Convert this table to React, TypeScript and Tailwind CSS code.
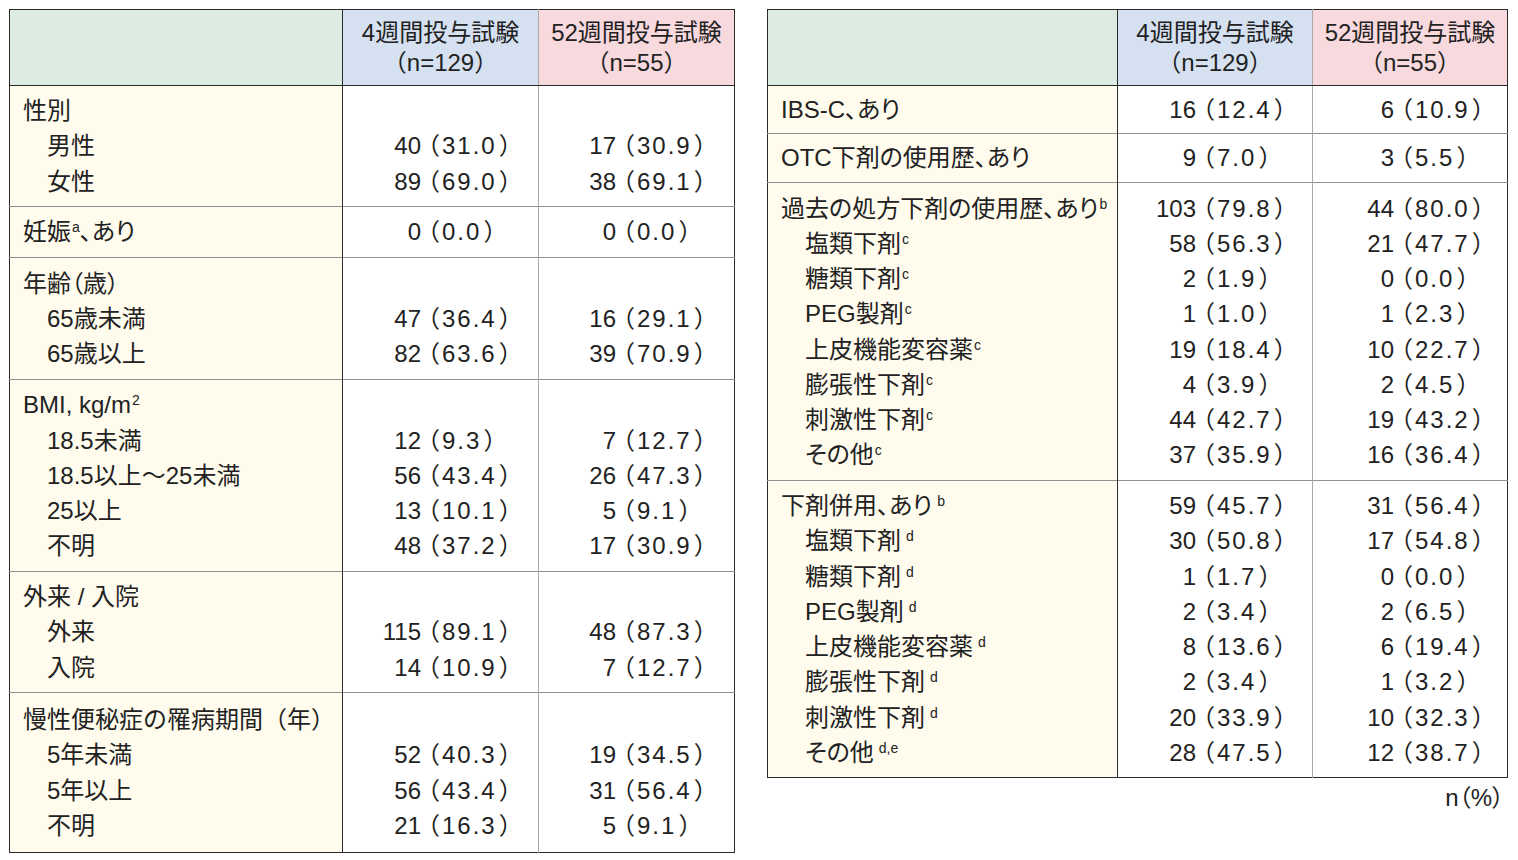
import React from "react";

type Line = { t: string; sup?: string; after?: string; gap?: boolean; ind?: boolean; np?: boolean };
type Section = { h: number; lines: Line[]; c1: string[]; c2: string[] };

const leftSections: Section[] = [
  {
    h: 121,
    lines: [{ t: "性別" }, { t: "男性", ind: true }, { t: "女性", ind: true }],
    c1: ["", "40|31.0", "89|69.0"],
    c2: ["", "17|30.9", "38|69.1"],
  },
  {
    h: 51,
    lines: [{ t: "妊娠", sup: "a", after: "、あり" }],
    c1: ["0|0.0"],
    c2: ["0|0.0"],
  },
  {
    h: 122,
    lines: [{ t: "年齢（歳）" }, { t: "65歳未満", ind: true }, { t: "65歳以上", ind: true }],
    c1: ["", "47|36.4", "82|63.6"],
    c2: ["", "16|29.1", "39|70.9"],
  },
  {
    h: 192,
    lines: [
      { t: "BMI, kg/m", sup: "2" },
      { t: "18.5未満", ind: true },
      { t: "18.5以上～25未満", ind: true },
      { t: "25以上", ind: true },
      { t: "不明", ind: true },
    ],
    c1: ["", "12|9.3", "56|43.4", "13|10.1", "48|37.2"],
    c2: ["", "7|12.7", "26|47.3", "5|9.1", "17|30.9"],
  },
  {
    h: 121,
    lines: [{ t: "外来 / 入院" }, { t: "外来", ind: true }, { t: "入院", ind: true }],
    c1: ["", "115|89.1", "14|10.9"],
    c2: ["", "48|87.3", "7|12.7"],
  },
  {
    h: 160,
    lines: [
      { t: "慢性便秘症の罹病期間（年）", np: true },
      { t: "5年未満", ind: true },
      { t: "5年以上", ind: true },
      { t: "不明", ind: true },
    ],
    c1: ["", "52|40.3", "56|43.4", "21|16.3"],
    c2: ["", "19|34.5", "31|56.4", "5|9.1"],
  },
];

const rightSections: Section[] = [
  {
    h: 48,
    lines: [{ t: "IBS-C、あり" }],
    c1: ["16|12.4"],
    c2: ["6|10.9"],
  },
  {
    h: 49,
    lines: [{ t: "OTC下剤の使用歴、あり" }],
    c1: ["9|7.0"],
    c2: ["3|5.5"],
  },
  {
    h: 298,
    lines: [
      { t: "過去の処方下剤の使用歴、あり", sup: "b" },
      { t: "塩類下剤", sup: "c", ind: true },
      { t: "糖類下剤", sup: "c", ind: true },
      { t: "PEG製剤", sup: "c", ind: true },
      { t: "上皮機能変容薬", sup: "c", ind: true },
      { t: "膨張性下剤", sup: "c", ind: true },
      { t: "刺激性下剤", sup: "c", ind: true },
      { t: "その他", sup: "c", ind: true },
    ],
    c1: ["103|79.8", "58|56.3", "2|1.9", "1|1.0", "19|18.4", "4|3.9", "44|42.7", "37|35.9"],
    c2: ["44|80.0", "21|47.7", "0|0.0", "1|2.3", "10|22.7", "2|4.5", "19|43.2", "16|36.4"],
  },
  {
    h: 297,
    lines: [
      { t: "下剤併用、あり", sup: "b", gap: true },
      { t: "塩類下剤", sup: "d", ind: true, gap: true },
      { t: "糖類下剤", sup: "d", ind: true, gap: true },
      { t: "PEG製剤", sup: "d", ind: true, gap: true },
      { t: "上皮機能変容薬", sup: "d", ind: true, gap: true },
      { t: "膨張性下剤", sup: "d", ind: true, gap: true },
      { t: "刺激性下剤", sup: "d", ind: true, gap: true },
      { t: "その他", sup: "d,e", ind: true, gap: true },
    ],
    c1: ["59|45.7", "30|50.8", "1|1.7", "2|3.4", "8|13.6", "2|3.4", "20|33.9", "28|47.5"],
    c2: ["31|56.4", "17|54.8", "0|0.0", "2|6.5", "6|19.4", "1|3.2", "10|32.3", "12|38.7"],
  },
];

function Label({ l }: { l: Line }) {
  return (
    <div
      className={`h-[35.25px] leading-[35.25px] whitespace-nowrap ${
        l.np ? "" : "[font-feature-settings:'palt']"
      } ${l.ind ? "pl-[24px]" : ""}`}
    >
      {l.t}
      {l.sup && (
        <sup className={`text-[14px] top-[-8px] ${l.gap ? "ml-[5px]" : "ml-[1px]"}`}>{l.sup}</sup>
      )}
      {l.after}
    </div>
  );
}

function Value({ v, w }: { v: string; w: string }) {
  if (!v) return <div className="h-[35.25px]" />;
  const [n, p] = v.split("|");
  return (
    <div className="h-[35.25px] leading-[35.25px] flex whitespace-nowrap">
      <span className={`${w} shrink-0 text-right`}>{n}</span>
      <span className="ml-[-5px]">（</span>
      <span className="ml-[2px] tracking-[2px]">{p}</span>
      <span className="ml-[2px]">）</span>
    </div>
  );
}

function Table({
  sections,
  tw,
  widths,
  numW,
}: {
  sections: Section[];
  tw: string;
  widths: [string, string, string];
  numW: [string, string];
}) {
  return (
    <table className={`${tw} border-collapse table-fixed border border-[#2a2a2a] text-[24px] text-[#222]`}>
      <colgroup>
        <col className={widths[0]} />
        <col className={widths[1]} />
        <col className={widths[2]} />
      </colgroup>
      <thead>
        <tr className="h-[76px]">
          <th className="bg-[#ddece2] border-b border-r border-[#2a2a2a]" />
          <th className="bg-[#d5e1f1] border-b border-r border-b-[#2a2a2a] border-r-[#a8a8a8] font-normal leading-[30px] text-center">
            <div>4週間投与試験</div>
            <div>（n=129）</div>
          </th>
          <th className="bg-[#f8d9de] border-b border-[#2a2a2a] font-normal leading-[30px] text-center">
            <div>52週間投与試験</div>
            <div>（n=55）</div>
          </th>
        </tr>
      </thead>
      <tbody>
        {sections.map((s, i) => (
          <tr key={i} style={{ height: s.h }}>
            <td
              className={`bg-[#fffcee] border-r border-r-[#2a2a2a] align-middle pl-[13px] p-0 ${
                i > 0 ? "border-t border-t-[#8f8f8f]" : ""
              }`}
            >
              {s.lines.map((l, j) => (
                <Label key={j} l={l} />
              ))}
            </td>
            <td
              className={`bg-white border-r border-r-[#a8a8a8] align-middle p-0 ${
                i > 0 ? "border-t border-t-[#8f8f8f]" : ""
              }`}
            >
              {s.c1.map((v, j) => (
                <Value key={j} v={v} w={numW[0]} />
              ))}
            </td>
            <td
              className={`bg-white align-middle p-0 ${i > 0 ? "border-t border-t-[#8f8f8f]" : ""}`}
            >
              {s.c2.map((v, j) => (
                <Value key={j} v={v} w={numW[1]} />
              ))}
            </td>
          </tr>
        ))}
      </tbody>
    </table>
  );
}

export default function App() {
  return (
    <div className="w-[1518px] h-[860px] bg-white flex items-start gap-[32px] pl-[9px] pt-[9px] font-['Liberation_Sans','Noto_Sans_CJK_JP',sans-serif] text-[#222]">
      <Table
        sections={leftSections}
        tw="w-[726px]"
        widths={["w-[333px]", "w-[196px]", "w-[196px]"]}
        numW={["w-[78px]", "w-[77px]"]}
      />
      <div className="flex flex-col w-[741px]">
        <Table
          sections={rightSections}
          tw="w-[741px]"
          widths={["w-[350px]", "w-[195px]", "w-[195px]"]}
          numW={["w-[78px]", "w-[81px]"]}
        />
        <div className="text-right text-[24px] leading-[30px] mt-[5px] pr-[4px] [font-feature-settings:'palt']">
          n（%）
        </div>
      </div>
    </div>
  );
}
